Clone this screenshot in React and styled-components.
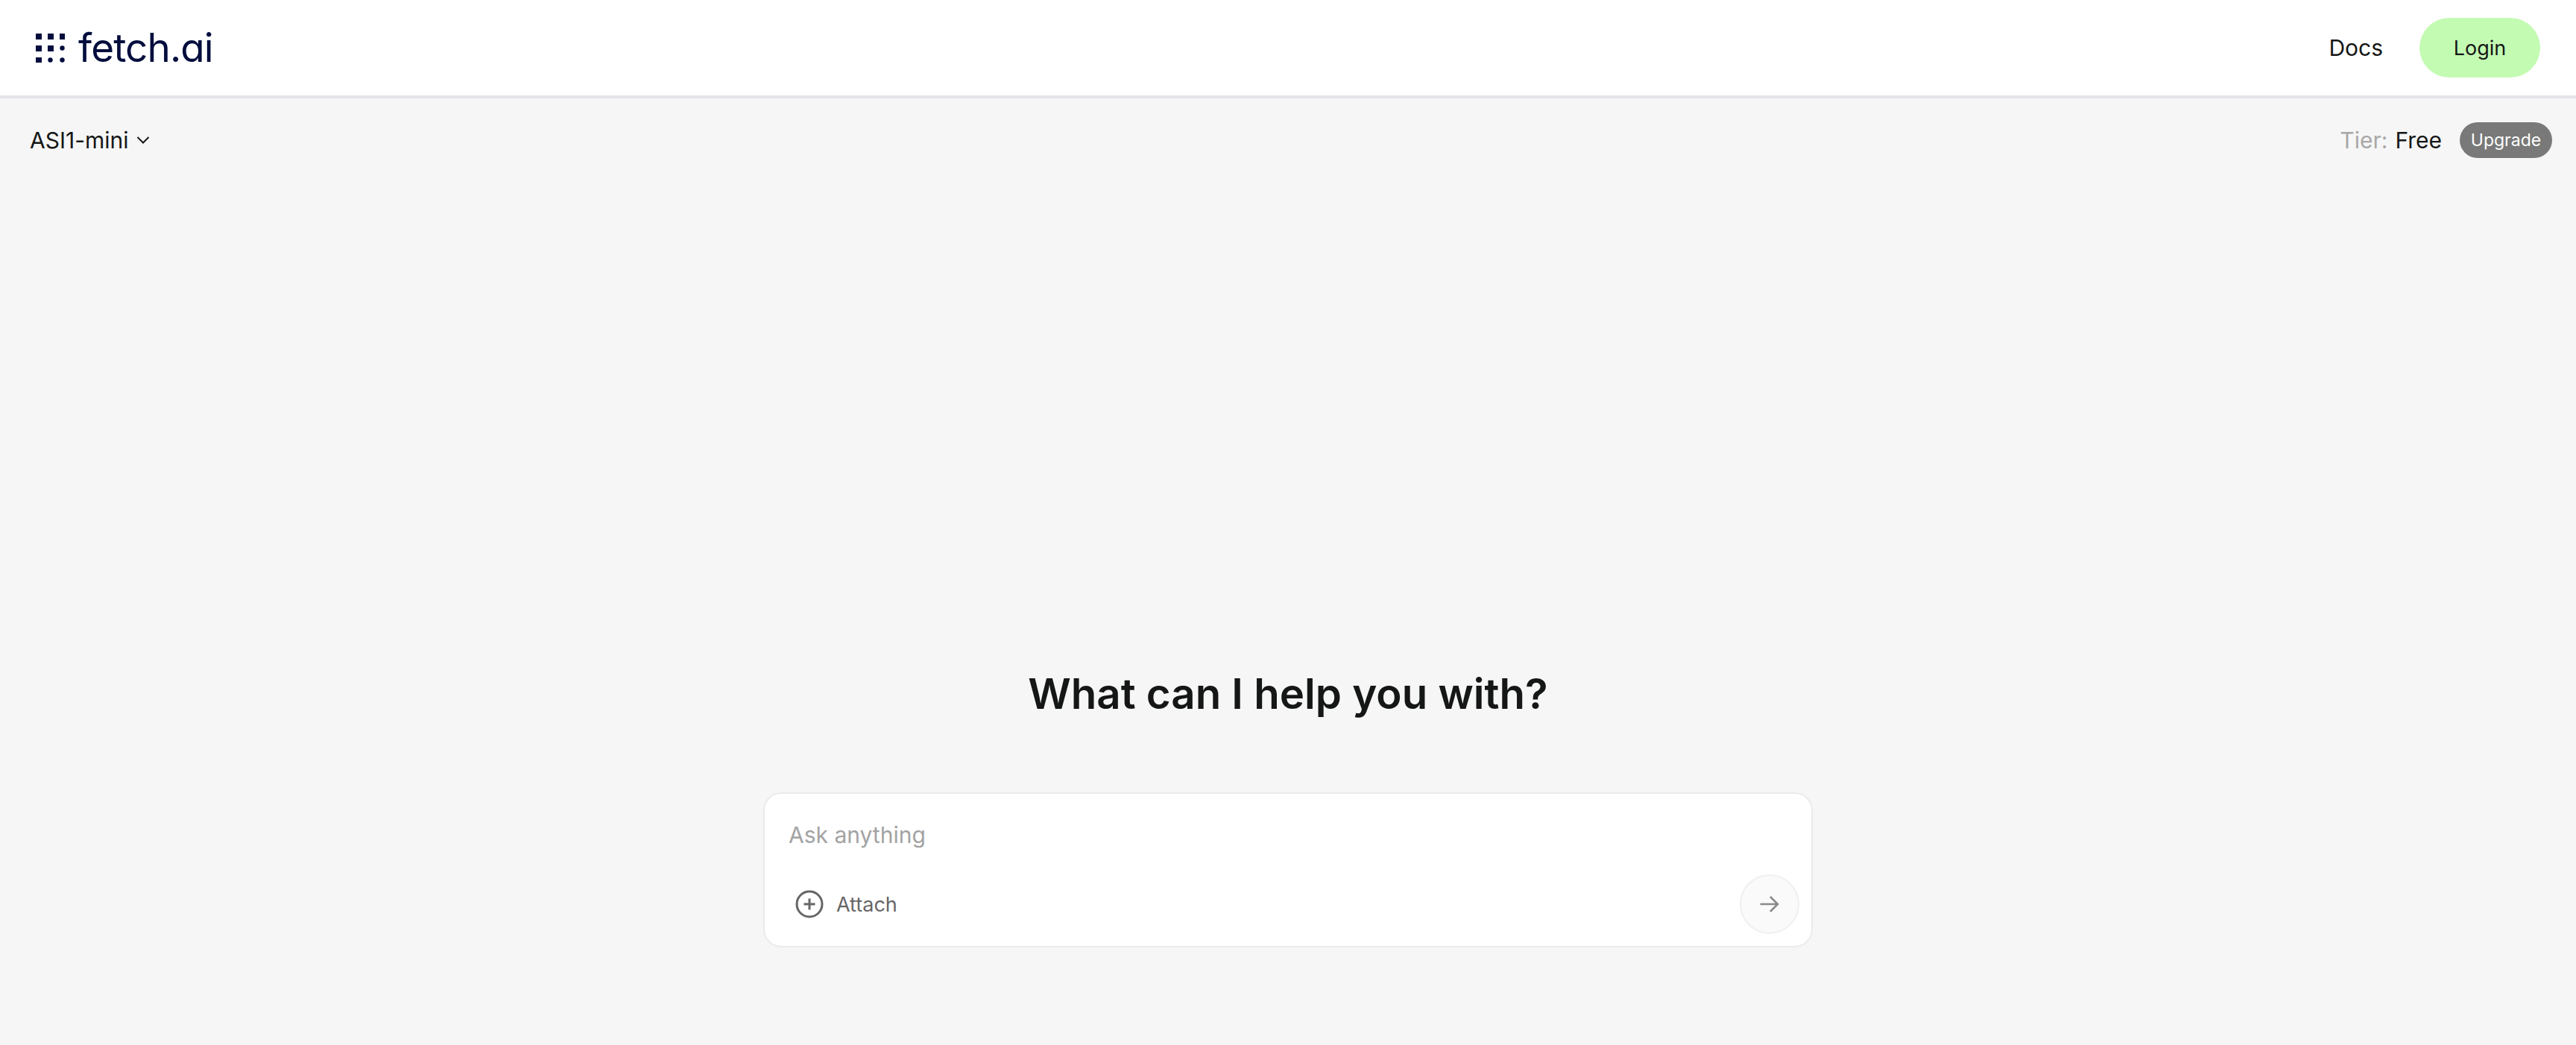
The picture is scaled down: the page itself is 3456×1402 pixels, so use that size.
import React from 'react'
import styled, { createGlobalStyle } from 'styled-components'

const GlobalStyle = createGlobalStyle`
  * { box-sizing: border-box; }
  html, body { margin: 0; padding: 0; background: #f6f6f6; }
  body { font-family: "Inter", "Liberation Sans", sans-serif; color: #151716; }
`

const Page = styled.div`
  height: 1402px;
  overflow: hidden;
  display: flex;
  flex-direction: column;
`

const Header = styled.header`
  height: 132px;
  flex: none;
  background: #fff;
  border-bottom: 4px solid #e3e5e8;
  display: flex;
  align-items: center;
  justify-content: space-between;
  padding: 0 48px;
`

const Logo = styled.div`
  display: flex;
  align-items: center;
  gap: 18px;
`

const LogoText = styled.span`
  font-size: 53px;
  line-height: 56px;
  color: #000d3d;
  letter-spacing: -0.9px;
  font-feature-settings: "cv11";
`

const HeaderRight = styled.nav`
  display: flex;
  align-items: center;
  gap: 49px;
`

const DocsLink = styled.a`
  font-size: 30px;
  color: #151716;
`

const LoginButton = styled.button`
  width: 162px;
  height: 80px;
  border: 0;
  border-radius: 40px;
  background: #c3fbb3;
  color: #151716;
  font: 400 27px "Inter", sans-serif;
`

const SubBar = styled.div`
  display: flex;
  align-items: center;
  justify-content: space-between;
  padding: 32px 32px 0 40px;
  height: 80px;
  flex: none;
`

const ModelPicker = styled.div`
  display: flex;
  align-items: center;
  gap: 10px;
  font-size: 30px;
`

const TierBox = styled.div`
  display: flex;
  align-items: center;
  font-size: 30px;
`

const TierLabel = styled.span`
  color: #a8a8a8;
  margin-right: 10px;
`

const UpgradeBadge = styled.span`
  margin-left: 24px;
  width: 124px;
  height: 48px;
  border-radius: 24px;
  background: #787978;
  color: #fff;
  font-size: 23px;
  display: flex;
  align-items: center;
  justify-content: center;
`

const Main = styled.main`
  flex: 1;
  display: flex;
  flex-direction: column;
  align-items: center;
  padding-top: 683px;
`

const Title = styled.h1`
  margin: 0 0 96px;
  font-size: 56.4px;
  line-height: 72px;
  font-weight: 600;
  color: #151716;
`

const Composer = styled.div`
  width: 1408px;
  height: 208px;
  background: #fff;
  border: 2px solid #ebebeb;
  border-radius: 24px;
  padding: 35px 16px 16px 32px;
  display: flex;
  flex-direction: column;
  justify-content: space-between;
`

const Placeholder = styled.div`
  font-size: 30px;
  line-height: 40px;
  color: #a3a3a3;
`

const ComposerRow = styled.div`
  display: flex;
  align-items: center;
  justify-content: space-between;
`

const AttachButton = styled.div`
  display: flex;
  align-items: center;
  gap: 17px;
  margin-left: 9px;
  font-size: 27px;
  color: #666;
`

const SendButton = styled.button`
  width: 80px;
  height: 80px;
  border-radius: 50%;
  border: 2px solid #f0f0f0;
  background: #fafafa;
  padding: 0;
  display: flex;
  align-items: center;
  justify-content: center;
`

const dots = [
  [0, 0, 's'], [16, 0, 's'], [32, 0, 's'],
  [0, 16, 's'], [16, 16, 's'], [32, 16, 'c'],
  [0, 32, 's'], [16, 32, 'c'], [32, 32, 'c'],
]

const LogoMark = () => (
  <svg width="39" height="39" viewBox="0 0 39 39" fill="#000d3d">
    {dots.map(([x, y, kind]) =>
      kind === 's'
        ? <rect key={`${x}-${y}`} x={x} y={y} width="8" height="8" />
        : <circle key={`${x}-${y}`} cx={x + 3.5} cy={y + 3.5} r="3.2" />
    )}
  </svg>
)

const Chevron = () => (
  <svg width="18" height="12" viewBox="0 0 18 12" fill="none" stroke="#151716" strokeWidth="2">
    <path d="M1.5 2 L9 9.5 L16.5 2" />
  </svg>
)

const PlusCircle = () => (
  <svg width="38" height="38" viewBox="0 0 38 38" fill="none" stroke="#666" strokeWidth="3">
    <circle cx="19" cy="19" r="17" />
    <path d="M19 11.5 V26.5 M11.5 19 H26.5" />
  </svg>
)

const ArrowRight = () => (
  <svg width="26" height="22" viewBox="0 0 26 22" fill="none" stroke="#8a8a8a" strokeWidth="2.6">
    <path d="M0.5 11 H24 M14 1 L24 11 L14 21" />
  </svg>
)

export default function App() {
  return (
    <Page>
      <GlobalStyle />
      <Header>
        <Logo>
          <LogoMark />
          <LogoText>fetch.ai</LogoText>
        </Logo>
        <HeaderRight>
          <DocsLink>Docs</DocsLink>
          <LoginButton>Login</LoginButton>
        </HeaderRight>
      </Header>
      <SubBar>
        <ModelPicker>ASI1-mini <Chevron /></ModelPicker>
        <TierBox>
          <TierLabel>Tier:</TierLabel> Free
          <UpgradeBadge>Upgrade</UpgradeBadge>
        </TierBox>
      </SubBar>
      <Main>
        <Title>What can I help you with?</Title>
        <Composer>
          <Placeholder>Ask anything</Placeholder>
          <ComposerRow>
            <AttachButton><PlusCircle /> Attach</AttachButton>
            <SendButton><ArrowRight /></SendButton>
          </ComposerRow>
        </Composer>
      </Main>
    </Page>
  )
}
